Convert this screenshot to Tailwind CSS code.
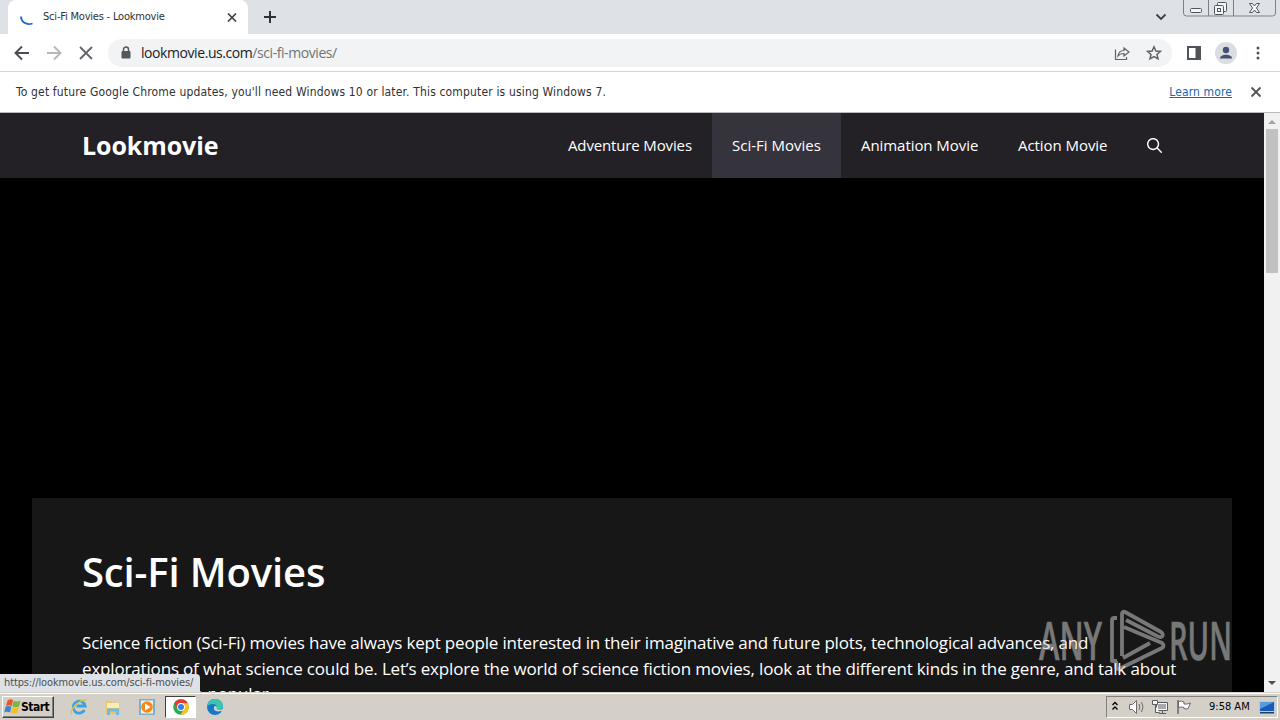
<!DOCTYPE html>
<html lang="en">
  <head>
    <meta charset="UTF-8" />
    <meta name="viewport" content="width=device-width, initial-scale=1.0" />
    <title>Sci-Fi Movies - Lookmovie</title>
    <script src="https://cdn.jsdelivr.net/npm/@tailwindcss/browser@4"></script>
  </head>
  <body class="relative flex h-[720px] w-[1280px] flex-col overflow-hidden bg-white font-['DejaVu_Sans_Condensed','DejaVu_Sans',sans-serif] text-[11px] text-[#303134]">
    <!-- Tab strip -->
    <div class="flex h-[34px] shrink-0 items-start bg-[#dee1e6] pl-2">
      <div class="flex h-[34px] w-60 items-center rounded-t-lg bg-white pr-2 pl-3">
        <svg class="h-4 w-4" viewBox="0 0 16 16" fill="none" stroke="#1a66d6" stroke-width="1.8">
          <path d="M1 7.500c.2 5.500 5 9 11.500 7" />
        </svg>
        <span class="ml-[7px] w-[124px] pt-px whitespace-nowrap tracking-[-0.2px]">Sci-Fi Movies - Lookmovie</span>
        <svg class="ml-auto h-4 w-4" viewBox="0 0 16 16" stroke="#3c4043" stroke-width="1.7">
          <path d="M4 4.500l8 8M12 4.500l-8 8" />
        </svg>
      </div>
      <svg class="mt-[9px] ml-[14px] h-4 w-4" viewBox="0 0 16 16" stroke="#303134" stroke-width="2">
        <path d="M8 2v12M2 8h12" />
      </svg>
      <svg class="mt-[9px] ml-auto h-4 w-4" viewBox="0 0 16 16" fill="none" stroke="#3c4043" stroke-width="1.8">
        <path d="M3.500 5.500L8 10l4.500-4.500" />
      </svg>
      <svg class="mr-1 ml-[14px] h-[17px] w-[93px]" viewBox="0 0 93 17" fill="none" stroke="#7d8087">
        <path d="M.5 0v13q0 3 3 3h86q3 0 3-3V0M25.500 0v16M50.500 0v16" />
        <g fill="#f4f5f7" stroke="#50545b">
          <rect x="7.500" y="8.500" width="11" height="4" rx="1" />
          <rect x="34.500" y="2.500" width="9" height="9" rx="1" />
          <rect x="31.500" y="5.500" width="9" height="9" rx="1" />
          <rect x="34.500" y="8.500" width="3" height="3" />
          <path d="M66.500 3.500h3l2 2.500 2-2.500h3l-3 4.500 3 4.500h-3l-2-2.500-2 2.500h-3l3-4.500z" />
        </g>
      </svg>
    </div>

    <!-- Toolbar -->
    <div class="flex h-[38px] shrink-0 items-center border-b border-[#d5d6d8] bg-white pl-[14px]">
      <svg class="h-4 w-4" viewBox="0 0 16 16" fill="none" stroke="#4a4d51" stroke-width="1.9">
        <path d="M15 8H2M8 1.500L1.500 8 8 14.500" />
      </svg>
      <svg class="ml-4 h-4 w-4" viewBox="0 0 16 16" fill="none" stroke="#b5b7ba" stroke-width="1.9">
        <path d="M1 8h13M8 1.500L14.500 8 8 14.500" />
      </svg>
      <svg class="ml-4 h-4 w-4" viewBox="0 0 16 16" stroke="#5f6368" stroke-width="1.8">
        <path d="M2 2l12 12M14 2L2 14" />
      </svg>
      <div class="ml-[14px] flex h-7 w-[1064px] items-center rounded-full bg-[#f1f3f4] pr-[10px] pl-[12px]">
        <svg class="h-3.5 w-3" viewBox="0 0 12 14" fill="none">
          <rect x="1.500" y="5" width="9" height="7.500" rx="1" fill="#54575b" />
          <path d="M3.500 5.500V3.500a2.500 2.500 0 015 0v2" stroke="#54575b" stroke-width="1.500" />
        </svg>
        <span class="ml-[9px] font-['Open_Sans',sans-serif] text-[14px] tracking-[-0.43px] text-[#202124]">lookmovie.us.com<span class="text-[#707377]">/sci-fi-movies/</span></span>
        <svg class="ml-auto h-4 w-4" viewBox="0 0 16 16" fill="none" stroke="#5f6368" stroke-width="1.200">
          <path d="M1.500 4.500v10h11V12" />
          <path d="M4 11c.5-4 2.500-5.500 6-5.500V3l5 4-5 4V8.500c-3 0-4.500.5-6 2.500z" />
        </svg>
        <svg class="ml-4 h-4 w-4" viewBox="0 0 16 16" fill="none" stroke="#5f6368" stroke-width="1.500">
          <path d="M8 1.800l1.900 4.200 4.500.4-3.400 3 1 4.400L8 11.500l-4 2.300 1-4.400-3.400-3 4.500-.4z" />
        </svg>
      </div>
      <svg class="ml-[14px] h-4 w-4" viewBox="0 0 16 16">
        <path fill="#505357" fill-rule="evenodd" d="M1 1h14v14H1zM3 3v10h6.500V3z" />
      </svg>
      <svg class="ml-[13px] h-[22px] w-[22px]" viewBox="0 0 22 22" fill="#475173">
        <circle cx="11" cy="11" r="11" fill="#dadde2" />
        <circle cx="11" cy="8" r="3.200" />
        <path d="M5 16.500c0-5 12-5 12 0z" />
      </svg>
      <svg class="ml-[13px] h-4 w-4" viewBox="0 0 16 16" fill="#505357">
        <circle cx="8" cy="3" r="1.500" /><circle cx="8" cy="8" r="1.500" /><circle cx="8" cy="13" r="1.500" />
      </svg>
    </div>

    <!-- Update notice -->
    <div class="flex h-[41px] shrink-0 items-center border-b border-[#b9babc] bg-white pr-4 pl-4 text-[12px]">
      <span class="whitespace-nowrap tracking-[0.16px]">To get future Google Chrome updates, you'll need Windows 10 or later. This computer is using Windows 7.</span>
      <a class="ml-auto whitespace-nowrap tracking-[0.12px] text-[#1967b2] underline">Learn more</a>
      <svg class="ml-4 h-4 w-4" viewBox="0 0 16 16" stroke="#505357" stroke-width="1.800">
        <path d="M3.500 3.500l9 9M12.500 3.500l-9 9" />
      </svg>
    </div>

    <!-- Page -->
    <div class="flex h-[579px] shrink-0 overflow-hidden bg-black font-['Open_Sans',sans-serif] text-white">
      <div class="relative h-full w-[1264px] overflow-hidden">
        <header class="flex h-[65px] items-center bg-[#242126] pr-[82px] pl-[82px]">
          <span class="text-[25px] font-bold tracking-[-0.1px]">Lookmovie</span>
          <nav class="ml-auto flex text-[15px] leading-[65px] whitespace-nowrap">
            <a class="w-[164px] px-5 tracking-[-0.14px]">Adventure Movies</a>
            <a class="w-[129px] bg-[#35343c] px-5">Sci-Fi Movies</a>
            <a class="w-[157px] px-5 tracking-[-0.06px]">Animation Movie</a>
            <a class="w-[129px] px-5 tracking-[-0.06px]">Action Movie</a>
            <a class="flex items-center px-5">
              <svg class="h-[15px] w-[15px]" viewBox="0 0 512 512" fill="#fff">
                <path fill-rule="evenodd" clip-rule="evenodd" d="M208 48c-88.366 0-160 71.634-160 160s71.634 160 160 160 160-71.634 160-160S296.366 48 208 48zM0 208C0 93.125 93.125 0 208 0s208 93.125 208 208c0 48.741-16.765 93.566-44.843 129.024l133.826 134.018c9.366 9.379 9.355 24.575-.025 33.941-9.379 9.366-24.575 9.355-33.941-.025L337.238 370.987C301.747 399.167 256.839 416 208 416 93.125 416 0 322.875 0 208z" />
              </svg>
            </a>
          </nav>
        </header>
        <main class="mx-8 mt-[320px] h-80 bg-[#171717] p-[50px]">
          <h1 class="text-[40px] leading-[48px] font-semibold tracking-[-0.14px]">Sci-Fi Movies</h1>
          <p class="mt-[34px] text-[17px] leading-[25.5px] tracking-[-0.187px] whitespace-nowrap">
            Science fiction (Sci-Fi) movies have always kept people interested in their imaginative and future plots, technological advances, and<br />
            <span class="tracking-[-0.17px]">explorations of what science could be. Let’s explore the world of science fiction movies, look at the different kinds in the genre, and talk about</span><br />
            why they are so popular.
          </p>
        </main>
        <!-- Link target bubble -->
        <div class="absolute bottom-0 left-0 flex h-[18px] w-[200px] items-center rounded-tr bg-[#dee1e6] pt-px pl-1 font-['DejaVu_Sans_Condensed','DejaVu_Sans',sans-serif] text-[11px] tracking-[-0.13px] whitespace-nowrap text-[#4c4f54]">https://lookmovie.us.com/sci-fi-movies/</div>
      </div>
      <div class="flex w-4 flex-col items-center bg-[#f1f1f1]">
        <svg class="h-4 w-4 shrink-0" viewBox="0 0 16 16" fill="#a3a3a3"><path d="M4 11l4-4 4 4z" /></svg>
        <div class="h-[144px] w-3 bg-[#c1c1c1]"></div>
        <svg class="mt-auto h-[17px] w-4 shrink-0" viewBox="0 0 16 17" fill="#505050"><path d="M4 6l4 4 4-4z" /></svg>
      </div>
    </div>

    <!-- Taskbar -->
    <div class="flex h-7 shrink-0 items-center border-t border-[#d4d0c8] bg-[#d4d0c8] pl-0.5 text-black shadow-[inset_0_1px_0_#fff]">
      <div class="flex h-[22px] w-[52px] items-center border border-t-white border-r-[#404040] border-b-[#404040] border-l-white pl-px shadow-[inset_-1px_-1px_0_#808080]">
        <svg class="h-[17px] w-[17px] shrink-0" viewBox="0 0 16 16">
          <path d="M3.500 2q3-1.500 5 0L7.300 7.500q-2.500-1.500-5.500 0z" fill="#e8542c" />
          <path d="M9 2.500q3 1.500 6.500 0l-1.300 5.500q-3 1.200-6.200 0z" fill="#76b843" />
          <path d="M1.500 8.200q2.500-1.500 5.500 0l-1.300 5.500q-2.500-1.500-5.500 0z" fill="#3f83cf" />
          <path d="M7.700 8.700q3 1.500 6.300 0l-1.300 5.500q-3 1.200-6.200 0z" fill="#f5bd2b" />
        </svg>
        <span class="text-[12px] font-bold tracking-[-0.5px]">Start</span>
      </div>
      <svg class="ml-4 h-[18px] w-[18px]" viewBox="0 0 18 18" fill="none">
        <path d="M14.500 12a6 6 0 11.600-4H6.500" stroke="#3ba3dc" stroke-width="2.800" />
        <path d="M2 16C-1.500 12 12-.5 16.500 2.500" stroke="#e9bd42" stroke-width="1.500" />
      </svg>
      <svg class="ml-4 h-[18px] w-[18px]" viewBox="0 0 18 18">
        <path d="M2 3h5l1 1.500h7.500V16H2z" fill="#e9c766" />
        <path d="M3 5h12v5H3z" fill="#f9edb5" />
        <path d="M3 17v-5.500q0-1 1-1h10q1 0 1 1V17h-3v-3.500H6V17z" fill="#75b9df" />
      </svg>
      <svg class="ml-4 h-[18px] w-[18px]" viewBox="0 0 18 18">
        <path d="M1 1h16v16H1z" fill="#79b0d8" />
        <path d="M3 2.500h12v13H3z" fill="#fff0d0" />
        <circle cx="9" cy="9" r="5.800" fill="#f18a1d" />
        <path d="M7 5.500L12.500 9 7 12.500z" fill="#fff" />
      </svg>
      <div class="ml-[9px] flex h-[22px] w-[31px] items-center justify-center border border-t-[#404040] border-r-white border-b-white border-l-[#404040] bg-white">
        <svg class="h-4 w-4" viewBox="0 0 16 16">
          <circle cx="8" cy="8" r="7.800" fill="#2da94f" />
          <path d="M1.200 4.200A7.800 7.800 0 0114.800 4.200H8L5 10z" fill="#e33b2e" />
          <path d="M14.800 4.200A7.800 7.800 0 017.500 15.800L11.300 9.500 8 4.200z" fill="#fcc31e" />
          <circle cx="8" cy="8" r="3.900" fill="#fff" />
          <circle cx="8" cy="8" r="3" fill="#3b7de9" />
        </svg>
      </div>
      <svg class="ml-[10px] h-[18px] w-[18px]" viewBox="0 0 18 18">
        <circle cx="9" cy="9" r="8" fill="#1479c9" />
        <path d="M1 9C2 3 6 1 9 1c6 0 8 4 8 7 0 4-5 4.500-7 3 1.500-2 .5-5-3-5-3 0-5 1-6 3z" fill="#37c6b0" />
        <path d="M8.500 8c-2 3.500 1 6.500 6.500 5l2 1 .5-3.500c-2 1.500-5 1.500-7 .5 1-1 .5-3-2-3z" fill="#d4d0c8" />
      </svg>
      <div class="mr-0.5 ml-auto flex h-[22px] w-[172px] items-center border border-t-[#808080] border-r-white border-b-white border-l-[#808080] pl-1">
        <svg class="h-3 w-2" viewBox="0 0 8 12" fill="none" stroke="#000" stroke-width="1.300">
          <path d="M1.500 4L4 1.500 6.500 4M1.500 8.500L4 6l2.500 2.500" />
        </svg>
        <svg class="ml-[9px] h-4 w-[18px]" viewBox="0 0 18 16" fill="#fff" stroke="#6c6c6c">
          <path d="M1.500 5.500h3l4-4v13l-4-4h-3z" />
          <path d="M11 5q1.500 3 0 6M13.500 3q3 5 0 10" fill="none" />
        </svg>
        <svg class="ml-[6px] h-4 w-4" viewBox="0 0 16 16" fill="#f7f7f7" stroke="#5c5c5c">
          <path d="M4.500 3.500h11v8h-11zM7 14.500h7M10.500 12v2" />
          <path d="M6 5h8v5H6z" fill="#a8a8a8" stroke="none" />
          <path d="M.5 1.500h5v4h-2v8h4M.5 1.500v4h3" />
        </svg>
        <svg class="ml-2 h-4 w-4" viewBox="0 0 16 16" fill="#fff" stroke="#696969">
          <path d="M2 1v14" stroke-width="1.500" />
          <path d="M2.500 2.500q3-1 5.500.500v2q3 .5 6.500-1L12 9.500q-2 1-4 0v-1q-3-1-5.500 0z" />
        </svg>
        <span class="ml-[17px] pt-0.5 text-[11px] whitespace-nowrap">9:58 AM</span>
        <svg class="mr-0.5 ml-auto h-4 w-4" viewBox="0 0 16 16">
          <path d="M.5 2.500h15v10H.5z" fill="#1b5bb5" stroke="#b4cbe6" />
          <path d="M1 3h14L1 10z" fill="#579be2" />
          <path d="M1 13h14v1.500H1z" fill="#1e3e6e" />
        </svg>
      </div>
    </div>

    <!-- Watermark -->
    <div class="absolute top-[608px] left-[1038px] h-16 w-[194px] opacity-50">
      <svg class="h-16 w-[194px]" viewBox="0 0 194 64" fill="none" stroke="#d8d8d8">
        <g fill="#d8d8d8" stroke="#d8d8d8" stroke-width=".5" font-family="Open Sans, sans-serif" font-weight="600" font-size="52">
          <text x="1" y="51.500" textLength="63" lengthAdjust="spacingAndGlyphs">ANY</text>
          <text x="131" y="51.500" textLength="63" lengthAdjust="spacingAndGlyphs">RUN</text>
        </g>
        <path stroke-width="3.800" stroke-linejoin="round" d="M79 10h-2.500q-2.500 0-2.500 2.500V53h5M84 48V6q0-3 3-2L123 24q3 2.500 1 4.500-2 1.500-5-.5L88 12M86 19l38 16q3 2.500 0 5L81 61q-3 1-3-4V53M85 50l27-15" />
      </svg>
    </div>
  </body>
</html>
